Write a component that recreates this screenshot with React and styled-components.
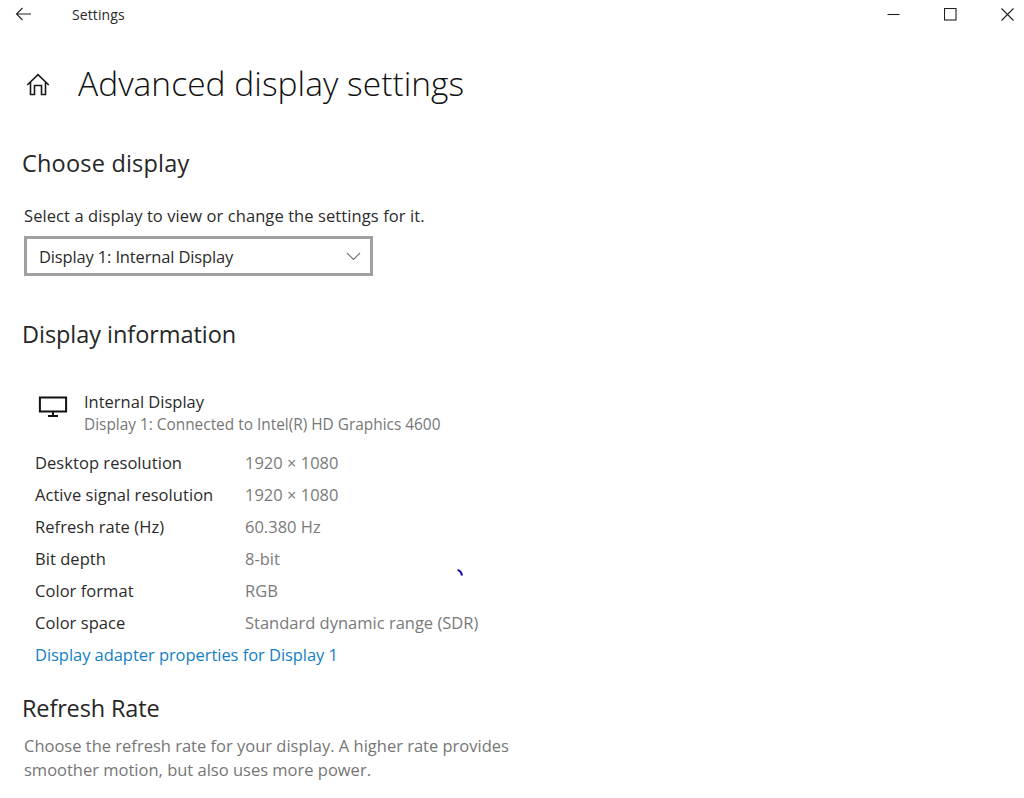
import React from "react";
import styled, { createGlobalStyle } from "styled-components";

const Global = createGlobalStyle`
  html, body { margin: 0; padding: 0; background: #fff; }
  body { font-family: "Open Sans", "Noto Sans", "Liberation Sans", sans-serif; color: #1a1a1a; }
`;
const Page = styled.div`
  position: relative;
  width: 1024px;
  height: 798px;
  overflow: hidden;
  background: #fff;
`;
const TitleBar = styled.header`
  display: flex;
  align-items: center;
  height: 30px;
  padding: 0 10px 0 15px;
`;
const BackButton = styled.span`
  display: flex;
  width: 57px;
  margin-top: -3px;
`;
const AppName = styled.span`
  font-size: 14px;
  letter-spacing: 0.1px;
  color: #2a2a2a;
  flex: 1;
  margin-top: -1px;
`;
const WindowControls = styled.div`
  display: flex;
  gap: 44px;
  margin-top: -2px;
`;
const WindowButton = styled.span`
  display: flex;
`;
const Content = styled.main`
  padding: 30px 0 0 23px;
`;
const PageHead = styled.div`
  display: flex;
  align-items: center;
  height: 48px;
  gap: 28px;
  padding-left: 3px;
`;
const PageTitle = styled.h1`
  margin: -2px 0 0;
  font-size: 33.5px;
  font-weight: 300;
  letter-spacing: 0.04px;
  color: #111;
`;
const SectionTitle = styled.h2`
  margin: ${(p) => p.$top}px 0 0 -1px;
  font-size: 23.5px;
  line-height: 32px;
  font-weight: 400;
  letter-spacing: ${(p) => p.$track}px;
  color: #262626;
`;
const Hint = styled.p`
  margin: 26px 0 0 1px;
  font-size: 16.5px;
  line-height: 22px;
  letter-spacing: 0.09px;
  color: #2b2b2b;
`;
const Select = styled.div`
  box-sizing: border-box;
  display: flex;
  align-items: center;
  justify-content: space-between;
  width: 349px;
  height: 40px;
  margin: 9px 0 0 1px;
  padding: 0 9px 0 12px;
  border: 3px solid #a0a0a0;
  font-size: 16.5px;
  letter-spacing: -0.15px;
  color: #2b2b2b;
`;
const DeviceRow = styled.div`
  display: flex;
  margin: 39px 0 0 15px;
`;
const DeviceIcon = styled.span`
  display: flex;
  width: 46px;
  padding-top: 7px;
`;
const DeviceName = styled.div`
  font-size: 16.5px;
  line-height: 25px;
  color: #2b2b2b;
`;
const DeviceSub = styled.div`
  margin-top: 1px;
  font-size: 15.4px;
  line-height: 20px;
  color: #777;
`;
const Specs = styled.dl`
  display: grid;
  grid-template-columns: 210px auto;
  grid-auto-rows: 32px;
  align-items: center;
  justify-content: start;
  margin: 11px 0 0 12px;
`;
const SpecLabel = styled.dt`
  font-size: 16.5px;
  letter-spacing: 0.05px;
  color: #2b2b2b;
`;
const SpecValue = styled.dd`
  margin: 0;
  font-size: 16.5px;
  color: #7a7a7a;
`;
const AdapterLink = styled.a`
  display: block;
  margin: 1px 0 0 12px;
  font-size: 16.5px;
  line-height: 32px;
  letter-spacing: -0.05px;
  color: #1380c4;
`;
const Description = styled.p`
  margin: 10px 0 0 1px;
  width: 500px;
  font-size: 16.5px;
  line-height: 24px;
  color: #767676;
`;
const Spinner = styled.svg`
  position: absolute;
  left: 456px;
  top: 568px;
`;

const specs = [
  ["Desktop resolution", "1920 × 1080"],
  ["Active signal resolution", "1920 × 1080"],
  ["Refresh rate (Hz)", "60.380 Hz"],
  ["Bit depth", "8-bit"],
  ["Color format", "RGB"],
  ["Color space", "Standard dynamic range (SDR)"],
];

export default function App() {
  return (
    <Page>
      <Global />
      <TitleBar>
        <BackButton>
          <svg width="17" height="14" viewBox="0 0 17 14" fill="none" stroke="#222" strokeWidth="1.1">
            <path d="M1.5 7H16M7.5 1L1.5 7L7.5 13" />
          </svg>
        </BackButton>
        <AppName>Settings</AppName>
        <WindowControls>
          <WindowButton>
            <svg width="13" height="13" viewBox="0 0 13 13" fill="none" stroke="#222" strokeWidth="1.1"><path d="M0.5 6.5H12.5" /></svg>
          </WindowButton>
          <WindowButton>
            <svg width="13" height="13" viewBox="0 0 13 13" fill="none" stroke="#222" strokeWidth="1.1"><rect x="0.5" y="0.5" width="11.5" height="11.5" /></svg>
          </WindowButton>
          <WindowButton>
            <svg width="13" height="13" viewBox="0 0 13 13" fill="none" stroke="#222" strokeWidth="1.1"><path d="M0.5 0.5L12.5 12.5M12.5 0.5L0.5 12.5" /></svg>
          </WindowButton>
        </WindowControls>
      </TitleBar>
      <Content>
        <PageHead>
          <svg width="24" height="24" viewBox="0 0 24 24" fill="none" stroke="#1a1a1a" strokeWidth="1.6">
            <path d="M1.2 13L12 2.6L22.8 13M4.5 10V22.5H8.5V13.5H15.5V22.5H19.5V10" />
          </svg>
          <PageTitle>Advanced display settings</PageTitle>
        </PageHead>
        <SectionTitle $top={39} $track={0.2}>Choose display</SectionTitle>
        <Hint>Select a display to view or change the settings for it.</Hint>
        <Select>
          Display 1: Internal Display
          <svg width="15" height="9" viewBox="0 0 15 9" fill="none" stroke="#707070" strokeWidth="1.1">
            <path d="M1 1L7.5 7.5L14 1" />
          </svg>
        </Select>
        <SectionTitle $top={42} $track={-0.05}>Display information</SectionTitle>
        <DeviceRow>
          <DeviceIcon>
            <svg width="30" height="21" viewBox="0 0 30 21" fill="none" stroke="#111" strokeWidth="2">
              <path d="M1.9 1.5H28.1V15.5H1.9ZM15 15.5V20M10 20H20" />
            </svg>
          </DeviceIcon>
          <div>
            <DeviceName>Internal Display</DeviceName>
            <DeviceSub>Display 1: Connected to Intel(R) HD Graphics 4600</DeviceSub>
          </div>
        </DeviceRow>
        <Specs>
          {specs.map(([k, v]) => (
            <React.Fragment key={k}>
              <SpecLabel>{k}</SpecLabel>
              <SpecValue>{v}</SpecValue>
            </React.Fragment>
          ))}
        </Specs>
        <AdapterLink>Display adapter properties for Display 1</AdapterLink>
        <SectionTitle $top={21} $track={-0.15}>Refresh Rate</SectionTitle>
        <Description>Choose the refresh rate for your display. A higher rate provides smoother motion, but also uses more power.</Description>
      </Content>
      <Spinner width="10" height="10" viewBox="0 0 10 10" fill="none" stroke="#1a12a8" strokeWidth="2.2">
        <path d="M1.5 2Q5 2.5 6 7.5" />
      </Spinner>
    </Page>
  );
}
